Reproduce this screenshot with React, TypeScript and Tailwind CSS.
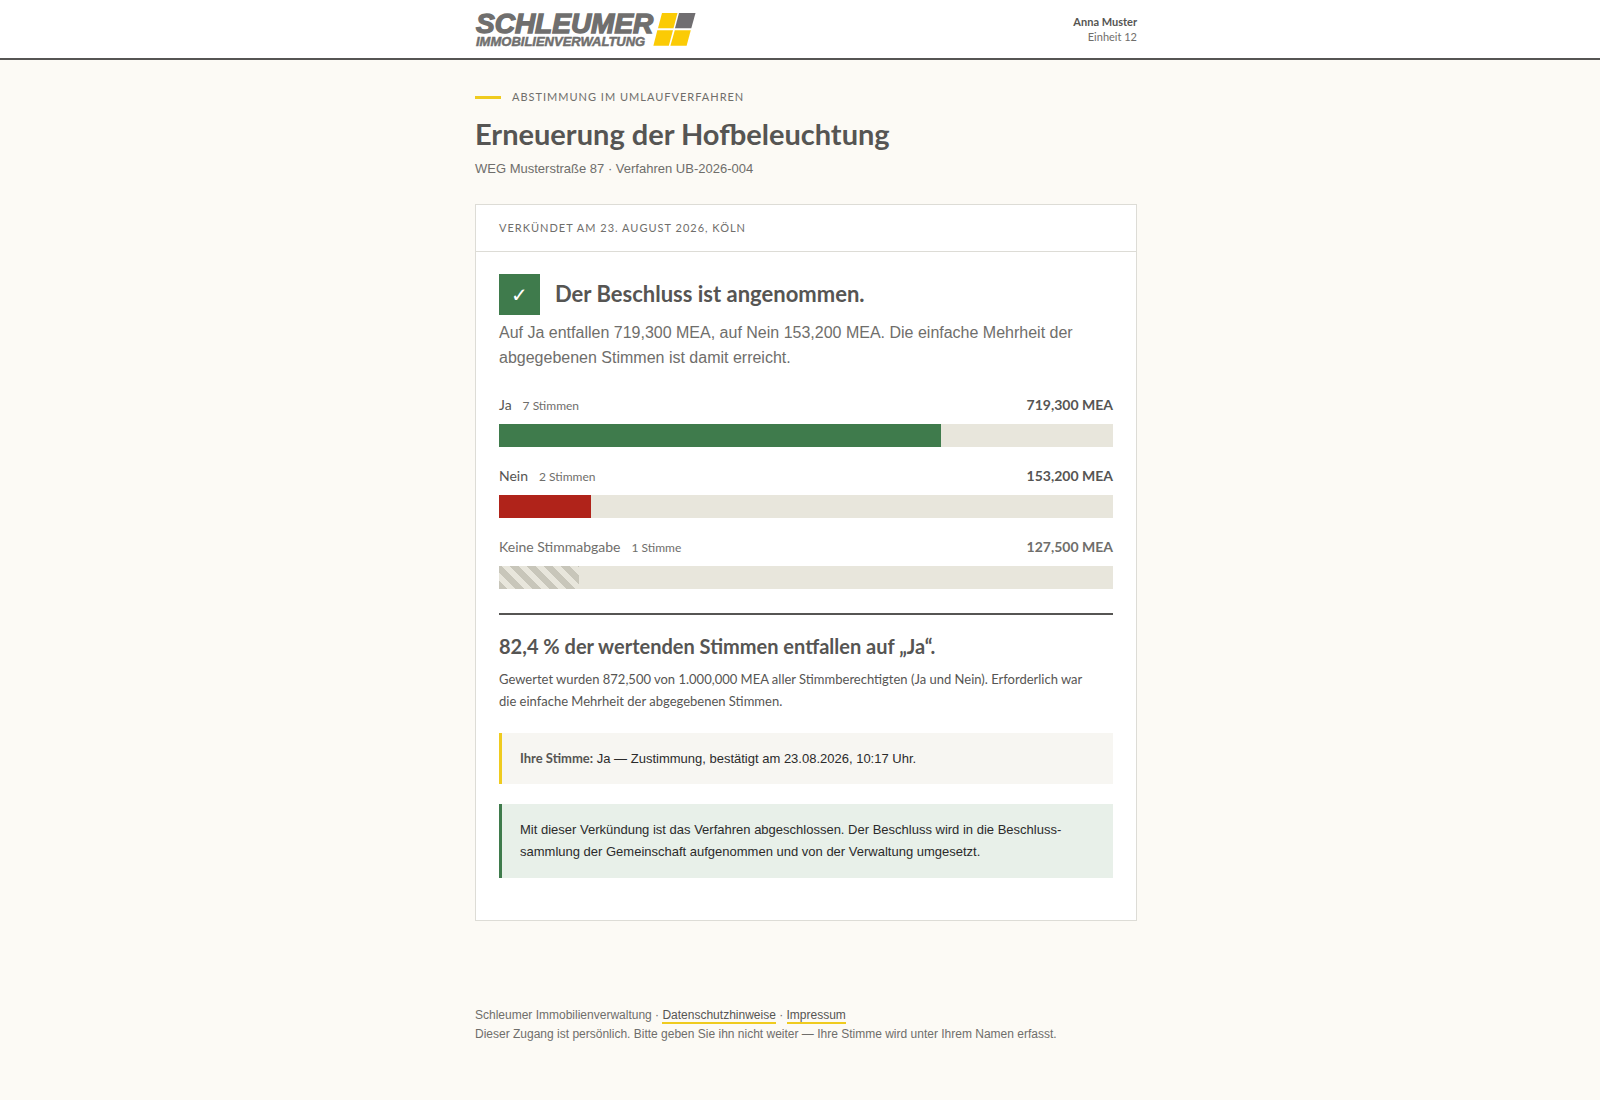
import { Fragment, type ReactNode } from 'react';

const results = [
  {
    label: 'Ja',
    votes: '7 Stimmen',
    mea: '719,300 MEA',
    share: 72,
    bar: 'bg-[#3f7b4c]',
    text: 'text-[#565553]',
  },
  {
    label: 'Nein',
    votes: '2 Stimmen',
    mea: '153,200 MEA',
    share: 15,
    bar: 'bg-[#b0231a]',
    text: 'text-[#565553]',
  },
  {
    label: 'Keine Stimmabgabe',
    votes: '1 Stimme',
    mea: '127,500 MEA',
    share: 13,
    bar: 'bg-[repeating-linear-gradient(45deg,#c8c6ba_0_6px,#e8e6dc_6px_12px)]',
    text: 'text-[#6f6e6b]',
  },
];

const links = [
  { path: '#datenschutz', name: 'Datenschutzhinweise' },
  { path: '#impressum', name: 'Impressum' },
];

function Logo() {
  return (
    <svg
      width="222"
      height="46"
      viewBox="0 -6 222 46"
      role="img"
      aria-label="Schleumer Immobilienverwaltung"
      className="font-['Liberation_Sans',sans-serif] font-bold italic"
    >
      <g fill="#706f6e" stroke="#706f6e">
        <text x="1" y="21" fontSize="28" strokeWidth="1.4">SCHLEUMER</text>
        <text x="1" y="34" fontSize="13" strokeWidth="0.5">IMMOBILIENVERWALTUNG</text>
      </g>
      <path d="M187 1h15.500l-4 15.300h-15.500z" fill="#fbcb05" />
      <path d="M204 1h16.500l-4.200 15.300h-16.300z" fill="#706e71" />
      <path d="M182.300 18.300h15.700l-4.200 15.400h-15.400z" fill="#fbcb05" />
      <path d="M199.800 18.300h16l-4.200 15.400h-16.200z" fill="#fbcb05" />
    </svg>
  );
}

// Shared column for header, content and footer
function Column({ children }: { children: ReactNode }) {
  return (
    <div className="pl-3">
      <div className="mx-auto max-w-[662px]">{children}</div>
    </div>
  );
}

function Header() {
  return (
    <header className="border-b-2 border-[#565553] bg-white">
      <Column>
        <div className="flex h-[58px] items-center justify-between">
          <Logo />
          <div className="text-right font-['Lato',sans-serif] text-[11px] leading-[15px]">
            <div className="font-bold">Anna Muster</div>
            <div className="text-[#6f6e6b]">Einheit 12</div>
          </div>
        </div>
      </Column>
    </header>
  );
}

function ResultBars() {
  return (
    <div className="mt-[23px] space-y-[17px] font-['Lato',sans-serif]">
      {results.map((r) => (
        <div key={r.label} className={r.text}>
          <div className="flex h-[31px] items-start justify-between text-sm leading-6">
            <div>
              {r.label}
              <span className="ml-[11px] text-xs text-[#6f6e6b]">{r.votes}</span>
            </div>
            <div className="font-bold">{r.mea}</div>
          </div>
          <div className="h-[23px] bg-[#e8e6dc]">
            <div className={`h-full ${r.bar}`} style={{ width: `${r.share}%` }} />
          </div>
        </div>
      ))}
    </div>
  );
}

function Card() {
  return (
    <section className="mt-6 border border-[#dddcd6] bg-white">
      <div className="border-b border-[#dddcd6] px-[23px] py-3 font-['Lato',sans-serif] text-[11px] leading-[22px] tracking-[1px] text-[#6f6e6b] uppercase">
        Verkündet am 23. August 2026, Köln
      </div>
      <div className="px-[23px] pt-[22px] pb-[42px]">
        <div className="flex items-center gap-[15px]">
          <div className="flex size-[41px] items-center justify-center bg-[#3f7b4c] text-xl text-white">✓</div>
          <h2 className="pb-0.5 font-['Lato',sans-serif] text-[22px] leading-7 font-bold">Der Beschluss ist angenommen.</h2>
        </div>
        <p className="mt-[5px] text-base leading-[25px] text-[#6f6e6b]">
          Auf Ja entfallen 719,300 MEA, auf Nein 153,200 MEA. Die einfache Mehrheit der abgegebenen Stimmen ist damit erreicht.
        </p>

        <ResultBars />

        <div className="mt-6 border-t-2 border-[#565553] pt-[17px] font-['Lato',sans-serif]">
          <h3 className="text-xl leading-7 font-bold">82,4 % der wertenden Stimmen entfallen auf „Ja“.</h3>
          <p className="mt-2 text-[13px] leading-[22px]">
            Gewertet wurden 872,500 von 1.000,000 MEA aller Stimmberechtigten (Ja und Nein). Erforderlich war die&nbsp;einfache Mehrheit der abgegebenen Stimmen.
          </p>
        </div>

        <div className="mt-[21px] border-l-3 border-[#efcb1f] bg-[#f7f6f2] px-[18px] py-[14px] text-[13px] leading-[22px] text-[#2b2b2b]">
          <strong className="font-['Lato',sans-serif] font-bold text-[#565553]">Ihre Stimme:</strong> Ja — Zustimmung, bestätigt am 23.08.2026, 10:17 Uhr.
        </div>

        <div className="mt-5 border-l-3 border-[#3f7b4c] bg-[#e8f0e9] px-[18px] py-[15px] text-[13px] leading-[22px] text-[#2b2b2b]">
          Mit dieser Verkündung ist das Verfahren abgeschlossen. Der Beschluss wird in die Beschluss&shy;sammlung der Gemeinschaft aufgenommen und von der Verwaltung umgesetzt.
        </div>
      </div>
    </section>
  );
}

export default function App() {
  return (
    <div className="min-h-screen bg-[#fcfaf5] font-['Liberation_Sans',sans-serif] text-[#565553]">
      <Header />
      <Column>
        <main className="pt-[27px]">
          <div className="flex items-center gap-[11px] font-['Lato',sans-serif] text-[11px] leading-5 tracking-[1px] text-[#6f6e6b] uppercase">
            <span className="h-[3px] w-[26px] bg-[#efcb1f]" />
            Abstimmung im Umlaufverfahren
          </div>
          <h1 className="mt-[7px] font-['Lato',sans-serif] text-[29px] leading-10 font-bold">Erneuerung der Hofbeleuchtung</h1>
          <p className="mt-1 text-[13px] leading-[22px] text-[#6f6e6b]">WEG Musterstraße 87 · Verfahren UB-2026-004</p>
          <Card />
        </main>
        <footer className="mt-[85px] pb-12 text-xs leading-[19px] text-[#6f6e6b]">
          <div>
            Schleumer Immobilienverwaltung
            {links.map((l) => (
              <Fragment key={l.path}>
                {' · '}
                <a href={l.path} className="border-b-2 border-[#efcb1f] text-[#565553]">{l.name}</a>
              </Fragment>
            ))}
          </div>
          <div>Dieser Zugang ist persönlich. Bitte geben Sie ihn nicht weiter — Ihre Stimme wird unter Ihrem Namen erfasst.</div>
        </footer>
      </Column>
    </div>
  );
}
